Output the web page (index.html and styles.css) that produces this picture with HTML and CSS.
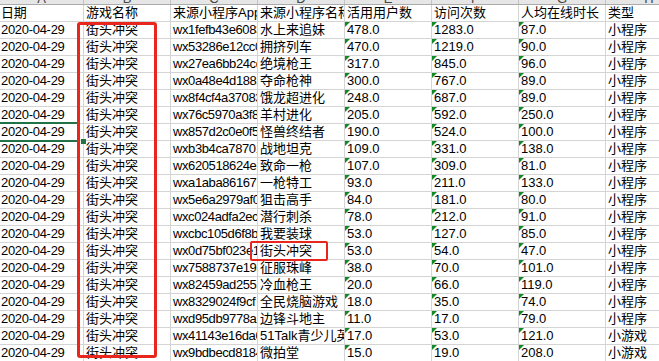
FILE: index.html
```html
<!DOCTYPE html>
<html lang="zh">
<head>
<meta charset="utf-8">
<title>Sheet</title>
<link rel="stylesheet" href="styles.css">
</head>
<body>
<div class="sheet">
  <div class="heads">
    <div class="h"><span>A</span></div><div class="h"><span>B</span></div><div class="h"><span>C</span></div><div class="h"><span>D</span></div><div class="h"><span>E</span></div><div class="h"><span>F</span></div><div class="h"><span>G</span></div><div class="h"><span>H</span></div>
  </div>
  <div class="grid">
    <div class="c d">日期</div><div class="c">游戏名称</div><div class="c">来源小程序AppID</div><div class="c">来源小程序名称</div><div class="c">活用用户数</div><div class="c">访问次数</div><div class="c">人均在线时长</div><div class="c">类型</div>

    <div class="c d">2020-04-29</div><div class="c">街头冲突</div><div class="c id">wx1fefb43e6083</div><div class="c">水上来追妹</div><div class="c n">478.0</div><div class="c n">1283.0</div><div class="c n">87.0</div><div class="c">小程序</div>
    <div class="c d">2020-04-29</div><div class="c">街头冲突</div><div class="c id">wx53286e12cc0a</div><div class="c">拥挤列车</div><div class="c n">470.0</div><div class="c n">1219.0</div><div class="c n">90.0</div><div class="c">小程序</div>
    <div class="c d">2020-04-29</div><div class="c">街头冲突</div><div class="c id">wx27ea6bb24cd1</div><div class="c">绝境枪王</div><div class="c n">317.0</div><div class="c n">845.0</div><div class="c n">96.0</div><div class="c">小程序</div>
    <div class="c d">2020-04-29</div><div class="c">街头冲突</div><div class="c id">wx0a48e4d1882</div><div class="c">夺命枪神</div><div class="c n">300.0</div><div class="c n">767.0</div><div class="c n">89.0</div><div class="c">小程序</div>
    <div class="c d">2020-04-29</div><div class="c">街头冲突</div><div class="c id">wx8f4cf4a37083</div><div class="c">饿龙超进化</div><div class="c n">248.0</div><div class="c n">687.0</div><div class="c n">89.0</div><div class="c">小程序</div>
    <div class="c d">2020-04-29</div><div class="c">街头冲突</div><div class="c id">wx76c5970a3f8</div><div class="c">羊村进化</div><div class="c n">205.0</div><div class="c n">592.0</div><div class="c n">250.0</div><div class="c">小程序</div>
    <div class="c d">2020-04-29</div><div class="c">街头冲突</div><div class="c id">wx857d2c0e0f5</div><div class="c">怪兽终结者</div><div class="c n">190.0</div><div class="c n">524.0</div><div class="c n">100.0</div><div class="c">小程序</div>
    <div class="c d">2020-04-29</div><div class="c">街头冲突</div><div class="c id">wxb3b4ca78701</div><div class="c">战地坦克</div><div class="c n">109.0</div><div class="c n">331.0</div><div class="c n">138.0</div><div class="c">小程序</div>
    <div class="c d">2020-04-29</div><div class="c">街头冲突</div><div class="c id">wx620518624e2</div><div class="c">致命一枪</div><div class="c n">107.0</div><div class="c n">309.0</div><div class="c n">81.0</div><div class="c">小程序</div>
    <div class="c d">2020-04-29</div><div class="c">街头冲突</div><div class="c id">wxa1aba861673</div><div class="c">一枪特工</div><div class="c n">93.0</div><div class="c n">211.0</div><div class="c n">133.0</div><div class="c">小程序</div>
    <div class="c d">2020-04-29</div><div class="c">街头冲突</div><div class="c id">wx5e6a2979af0</div><div class="c">狙击高手</div><div class="c n">84.0</div><div class="c n">181.0</div><div class="c n">80.0</div><div class="c">小程序</div>
    <div class="c d">2020-04-29</div><div class="c">街头冲突</div><div class="c id">wxc024adfa2ec</div><div class="c">潜行刺杀</div><div class="c n">78.0</div><div class="c n">212.0</div><div class="c n">91.0</div><div class="c">小程序</div>
    <div class="c d">2020-04-29</div><div class="c">街头冲突</div><div class="c id">wxcbc105d6f8b</div><div class="c">我要装球</div><div class="c n">53.0</div><div class="c n">127.0</div><div class="c n">85.0</div><div class="c">小程序</div>
    <div class="c d">2020-04-29</div><div class="c">街头冲突</div><div class="c id">wx0d75bf023e1</div><div class="c">街头冲突</div><div class="c n">53.0</div><div class="c n">54.0</div><div class="c n">47.0</div><div class="c">小程序</div>
    <div class="c d">2020-04-29</div><div class="c">街头冲突</div><div class="c id">wx7588737e19a</div><div class="c">征服珠峰</div><div class="c n">38.0</div><div class="c n">70.0</div><div class="c n">101.0</div><div class="c">小程序</div>
    <div class="c d">2020-04-29</div><div class="c">街头冲突</div><div class="c id">wx82459ad2553</div><div class="c">冷血枪王</div><div class="c n">20.0</div><div class="c n">66.0</div><div class="c n">119.0</div><div class="c">小程序</div>
    <div class="c d">2020-04-29</div><div class="c">街头冲突</div><div class="c id">wx8329024f9cf</div><div class="c">全民烧脑游戏</div><div class="c n">18.0</div><div class="c n">35.0</div><div class="c n">74.0</div><div class="c">小程序</div>
    <div class="c d">2020-04-29</div><div class="c">街头冲突</div><div class="c id">wxd95db9778a2</div><div class="c">边锋斗地主</div><div class="c n">11.0</div><div class="c n">17.0</div><div class="c n">79.0</div><div class="c">小程序</div>
    <div class="c d">2020-04-29</div><div class="c">街头冲突</div><div class="c id">wx41143e16da0</div><div class="c">51Talk青少儿英语</div><div class="c n">17.0</div><div class="c n">53.0</div><div class="c n">121.0</div><div class="c">小游戏</div>
    <div class="c d">2020-04-29</div><div class="c">街头冲突</div><div class="c id">wx9bdbecd8184</div><div class="c">微拍堂</div><div class="c n">15.0</div><div class="c n">19.0</div><div class="c n">208.0</div><div class="c">小游戏</div>
  </div>
  <div class="sel"><span class="handle"></span></div>
  <div class="mark mark-col"></div>
  <div class="mark mark-cell"></div>
</div>
</body>
</html>
```

FILE: styles.css
```css
html, body {
  margin: 0;
  padding: 0;
  background: #ffffff;
}
body {
  width: 659px;
  height: 361px;
  overflow: hidden;
  font-family: "Liberation Sans", "Noto Sans CJK SC", sans-serif;
  font-size: 13px;
  color: #000000;
}
.sheet {
  position: relative;
  width: 659px;
  height: 361px;
  overflow: hidden;
}
.heads {
  display: grid;
  grid-template-columns: 84px repeat(7, 87px);
  height: 5px;
  box-sizing: border-box;
  background: #e6e6e6;
  border-bottom: 1px solid #ababab;
}
.h {
  display: flex;
  justify-content: center;
  align-items: flex-end;
  overflow: hidden;
  border-right: 1px solid #c4c4c4;
  font-size: 13px;
  line-height: 13px;
  color: #444444;
}
.h span {
  margin-bottom: -1px;
}
.grid {
  display: grid;
  grid-template-columns: 84px repeat(7, 87px);
  grid-auto-rows: 17px;
}
.c {
  position: relative;
  box-sizing: border-box;
  border-right: 1px solid #d4d4d4;
  border-bottom: 1px solid #d4d4d4;
  padding-left: 2px;
  line-height: 16px;
  white-space: nowrap;
  overflow: hidden;
}
.d {
  padding-left: 1px;
  letter-spacing: -0.3px;
}
.id {
  letter-spacing: -0.4px;
}
.n::before {
  content: "";
  position: absolute;
  left: 0;
  top: 0;
  border-top: 5px solid #0f8a24;
  border-right: 5px solid transparent;
}
.sel {
  position: absolute;
  left: -4px;
  top: 122px;
  width: 84px;
  height: 20px;
  box-sizing: border-box;
  border: 2px solid #217346;
}
.handle {
  position: absolute;
  right: -8px;
  bottom: -4px;
  width: 5px;
  height: 5px;
  background: #217346;
}
.mark {
  position: absolute;
  box-sizing: border-box;
  border: 3px solid #e8261e;
  border-radius: 3px;
}
.mark-col {
  left: 77px;
  top: 22px;
  width: 80px;
  height: 336px;
}
.mark-cell {
  left: 250px;
  top: 241px;
  width: 78px;
  height: 20px;
  border-width: 2px;
  border-radius: 2px;
}
```
